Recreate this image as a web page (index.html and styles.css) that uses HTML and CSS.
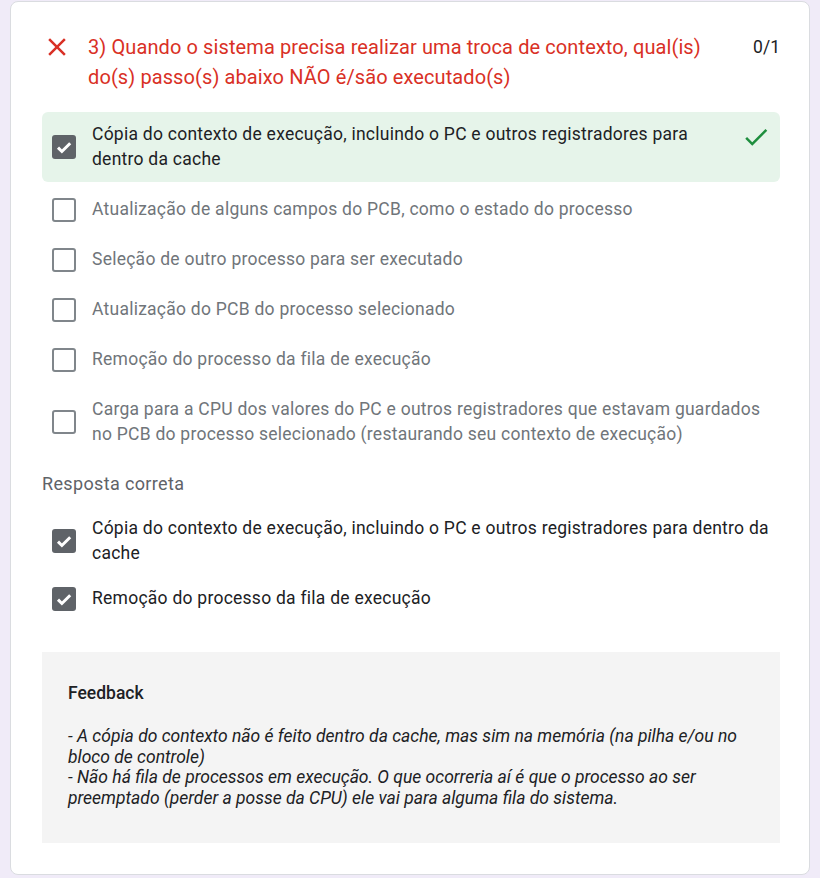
FILE: index.html
```html
<!DOCTYPE html>
<html lang="pt">
<head>
<meta charset="utf-8">
<title>Questão 3</title>
<link rel="stylesheet" href="styles.css">
</head>
<body>
<div class="card">
  <div class="header">
    <svg class="x-icon" viewBox="0 0 24 24" width="30" height="30"><path fill="#d93025" d="M19 6.41L17.59 5 12 10.59 6.41 5 5 6.41 10.59 12 5 17.59 6.41 19 12 13.41 17.59 19 19 17.59 13.41 12z"/></svg>
    <div class="title">3) Quando o sistema precisa realizar uma troca de contexto, qual(is) do(s) passo(s) abaixo NÃO é/são executado(s)</div>
    <div class="score">0/1</div>
  </div>

  <div class="options">
    <div class="option selected">
      <span class="box checked"><svg viewBox="0 0 24 24" width="24" height="24"><path d="M6 12.6l3.9 3.9 8.3-8.3" fill="none" stroke="#fff" stroke-width="3"/></svg></span>
      <span class="label">Cópia do contexto de execução, incluindo o PC e outros registradores para dentro da cache</span>
      <svg class="ok" viewBox="0 0 24 24" width="30" height="30"><path fill="#1e8e3e" d="M9 16.17L4.83 12l-1.42 1.41L9 19 21 7l-1.41-1.41z"/></svg>
    </div>
    <div class="option">
      <span class="box"></span>
      <span class="label muted">Atualização de alguns campos do PCB, como o estado do processo</span>
    </div>
    <div class="option">
      <span class="box"></span>
      <span class="label muted">Seleção de outro processo para ser executado</span>
    </div>
    <div class="option">
      <span class="box"></span>
      <span class="label muted">Atualização do PCB do processo selecionado</span>
    </div>
    <div class="option">
      <span class="box"></span>
      <span class="label muted">Remoção do processo da fila de execução</span>
    </div>
    <div class="option">
      <span class="box"></span>
      <span class="label muted">Carga para a CPU dos valores do PC e outros registradores que estavam guardados no PCB do processo selecionado (restaurando seu contexto de execução)</span>
    </div>
  </div>

  <div class="correct-title">Resposta correta</div>
  <div class="correct">
    <div class="option">
      <span class="box checked"><svg viewBox="0 0 24 24" width="24" height="24"><path d="M6 12.6l3.9 3.9 8.3-8.3" fill="none" stroke="#fff" stroke-width="3"/></svg></span>
      <span class="label">Cópia do contexto de execução, incluindo o PC e outros registradores para dentro da cache</span>
    </div>
    <div class="option">
      <span class="box checked"><svg viewBox="0 0 24 24" width="24" height="24"><path d="M6 12.6l3.9 3.9 8.3-8.3" fill="none" stroke="#fff" stroke-width="3"/></svg></span>
      <span class="label">Remoção do processo da fila de execução</span>
    </div>
  </div>

  <div class="feedback">
    <div class="fb-title">Feedback</div>
    <div class="fb-text">- A cópia do contexto não é feito dentro da cache, mas sim na memória (na pilha e/ou no bloco de controle)<br>- Não há fila de processos em execução. O que ocorreria aí é que o processo ao ser preemptado (perder a posse da CPU) ele vai para alguma fila do sistema.</div>
  </div>
</div>
</body>
</html>
```

FILE: styles.css
```css
html, body {
  margin: 0;
  padding: 0;
}
body {
  background: #f0ebf8;
  font-family: Roboto, "Liberation Sans", sans-serif;
  color: #202124;
}
.card {
  box-sizing: border-box;
  width: 800px;
  height: 874px;
  margin: 1px 0 0 10px;
  background: #fff;
  border: 1px solid #dadce0;
  border-radius: 8px;
  padding: 30px 29px 0 31px;
}
.header {
  display: flex;
  align-items: flex-start;
}
.x-icon {
  flex: none;
  margin-right: 16px;
}
.title {
  flex: 1;
  color: #d93025;
  font-size: 20px;
  line-height: 30px;
  letter-spacing: 0.1px;
  padding-right: 34px;
}
.score {
  flex: none;
  font-size: 17.5px;
  line-height: 30px;
  color: #202124;
}
.options {
  margin-top: 20px;
  display: flex;
  flex-direction: column;
  gap: 5px;
}
.option {
  display: flex;
  align-items: center;
  padding: 10px 14px 10px 10px;
  font-size: 17.5px;
  line-height: 25px;
  letter-spacing: 0.25px;
}
.option.selected {
  background: #e6f4ea;
  border-radius: 6px;
  padding-right: 9px;
}
.box {
  flex: none;
  box-sizing: border-box;
  width: 24px;
  height: 24px;
  border: 2.5px solid #80868b;
  border-radius: 3px;
  margin-right: 16px;
  display: flex;
  align-items: center;
  justify-content: center;
}
.box.checked {
  background: #5f6368;
  border: none;
}
.label {
  flex: 1;
  color: #202124;
}
.label.muted {
  color: #70757a;
}
.ok {
  flex: none;
  align-self: flex-start;
  margin-left: 20px;
}
.correct-title {
  margin-top: 15px;
  font-size: 18px;
  line-height: 24px;
  color: #5f6368;
  letter-spacing: 0.35px;
}
.correct {
  margin-top: 10px;
  display: flex;
  flex-direction: column;
}
.correct .option {
  padding-right: 0;
}
.feedback {
  margin-top: 31px;
  background: #f4f4f4;
  padding: 29px 26px 30px 26px;
  height: 191px;
  box-sizing: border-box;
}
.fb-title {
  font-size: 17.5px;
  font-weight: 500;
  line-height: 24px;
  color: #202124;
}
.fb-text {
  margin-top: 21px;
  font-size: 17.5px;
  font-style: italic;
  line-height: 20.7px;
  color: #202124;
}
```
